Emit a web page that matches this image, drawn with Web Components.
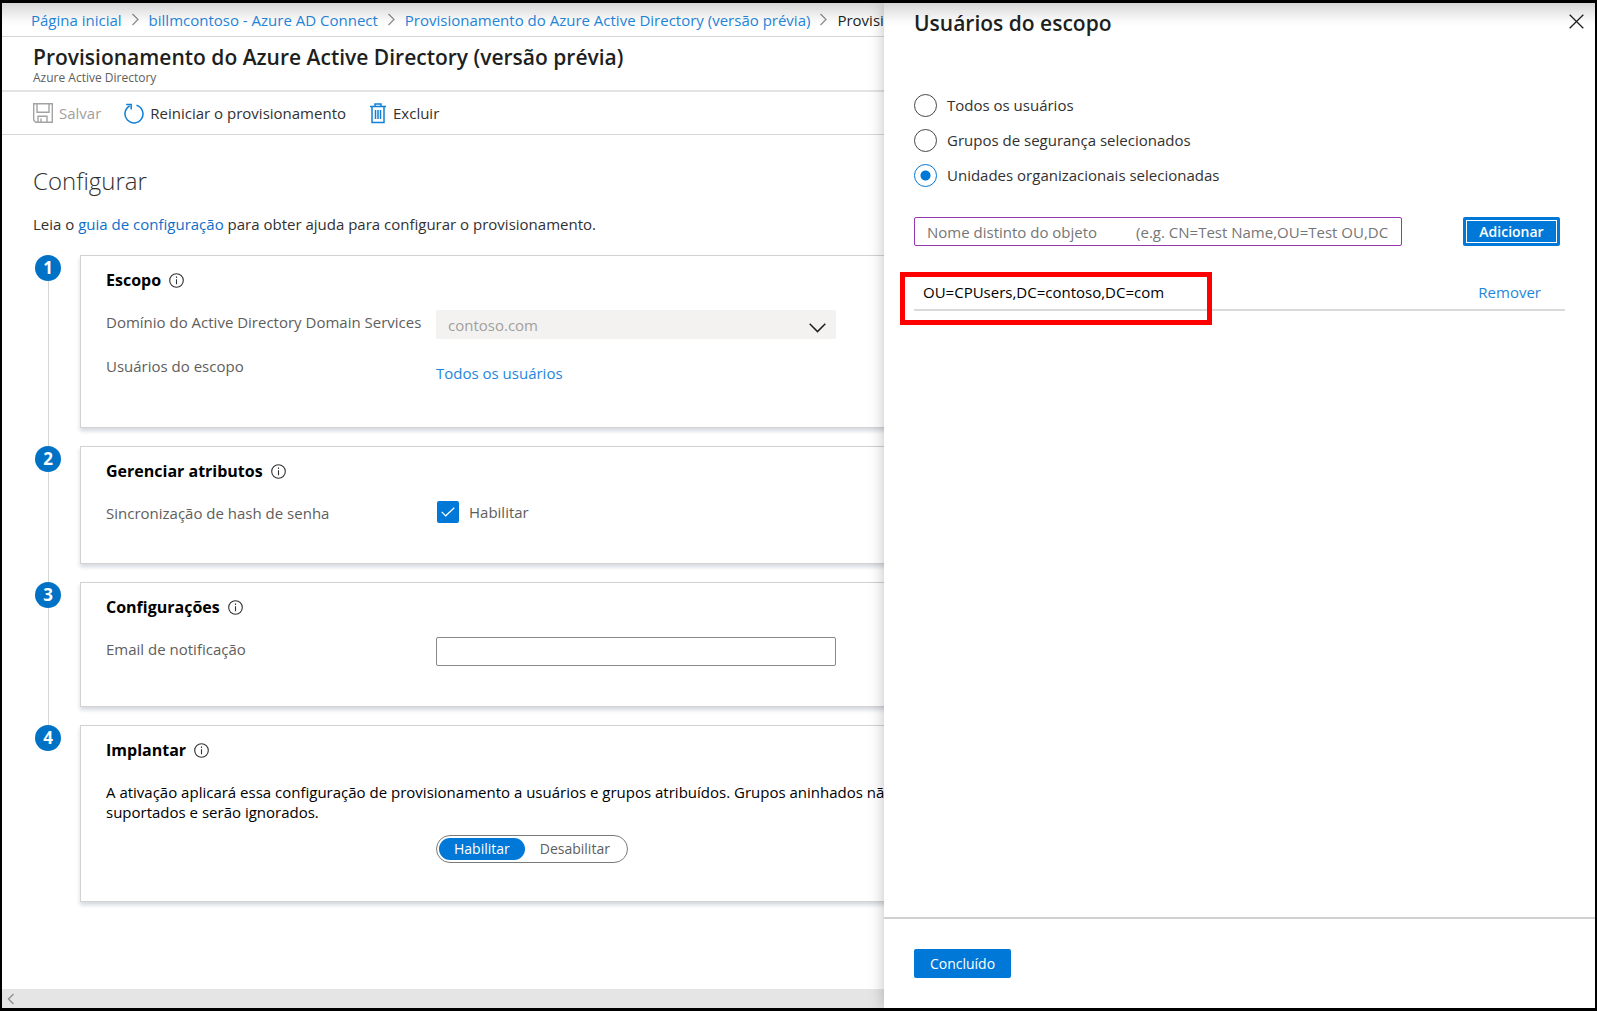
<!DOCTYPE html>
<html lang="pt-BR">
<head>
<meta charset="utf-8">
<title>Provisionamento do Azure Active Directory</title>
<style>
  html, body { height: 100%; margin: 0; }
  body {
    font-family: "Open Sans", "Noto Sans", sans-serif;
    font-size: 15px;
    line-height: 24px;
    color: #323130;
    background: #fff;
    --blue: #0078d7;
    --link: #1f86dc;
    --rule: #d6d6d6;
  }
</style>
</head>
<body>
<portal-frame>
  <portal-blade slot="main">
    <crumb-trail slot="crumbs"></crumb-trail>
    <blade-title slot="title" sub="Azure Active Directory">Provisionamento do Azure Active Directory (versão prévia)</blade-title>
    <command-bar slot="commands"></command-bar>
    <config-page></config-page>
  </portal-blade>
  <scope-panel slot="panel"></scope-panel>
</portal-frame>

<script>
const define = (name, html, setup) => {
  const tpl = document.createElement('template');
  tpl.innerHTML = html;
  customElements.define(name, class extends HTMLElement {
    constructor() {
      super();
      this.attachShadow({ mode: 'open' }).append(tpl.content.cloneNode(true));
    }
    connectedCallback() { if (setup) setup(this, this.shadowRoot); }
  });
};

define('portal-frame', `
<style>
  :host { display: grid; grid-template-columns: minmax(0, 1fr) minmax(0, 711px); grid-template-rows: minmax(0, 1fr);
    position: relative; box-sizing: border-box; height: 100vh; border: solid #000; border-width: 3px 2px; overflow: hidden; }
  .shade { position: absolute; inset: 0 0 auto 0; height: 24px; pointer-events: none; z-index: 3;
    background: linear-gradient(rgba(0,0,0,.16), rgba(0,0,0,.1) 30%, rgba(0,0,0,.02) 75%, transparent); }
</style>
<slot name="main"></slot><slot name="panel"></slot><div class="shade"></div>`);

define('portal-blade', `
<style>
  :host { display: flex; flex-direction: column; min-width: 0; overflow: hidden; }
  .body { flex: 1; min-height: 0; overflow: hidden; }
  .scroll { display: flex; align-items: center; height: 19px; background: #e5e5e5; padding-left: 5px; }
</style>
<slot name="crumbs"></slot><slot name="title"></slot><slot name="commands"></slot>
<div class="body"><slot></slot></div>
<div class="scroll"><svg width="8" height="12" viewBox="0 0 8 12" fill="none" stroke="#8e8e8e" stroke-width="1.3"><path d="M6.5 1 1.5 6l5 5"/></svg></div>`);

define('crumb-trail', `
<style>
  :host { display: block; border-bottom: 1px solid var(--rule); }
  nav { display: flex; align-items: center; height: 33px; padding-left: 29px; gap: 9px; white-space: nowrap; }
  a { color: var(--link); text-decoration: none; flex: none; }
  span { color: #201f1e; min-width: 0; overflow: hidden; }
  svg { flex: none; }
</style>
<nav aria-label="Trilha"></nav>`, (el, root) => {
  const sep = '<svg width="9" height="13" viewBox="0 0 9 13" fill="none" stroke="#8c8c8c" stroke-width="1.2"><path d="M1.5 1 7 6.5l-5.5 5.5"/></svg>';
  root.querySelector('nav').innerHTML = [
    '<a href="#">Página inicial</a>',
    '<a href="#">billmcontoso - Azure AD Connect</a>',
    '<a href="#">Provisionamento do Azure Active Directory (versão prévia)</a>',
    '<span>Provisionamento</span>'].join(sep);
});

define('blade-title', `
<style>
  :host { display: block; box-sizing: border-box; height: 55px; padding: 6px 0 0 31px; border-bottom: 2px solid #e3e3e3; white-space: nowrap; }
  h1 { margin: 0; font-size: 21px; line-height: 28px; font-weight: 600; color: #201f1e; }
  p { margin: 0; font-size: 12px; line-height: 14px; color: #605e5c; }
</style>
<h1><slot></slot></h1><p></p>`, (el, root) => { root.querySelector('p').textContent = el.getAttribute('sub'); });

define('command-bar', `
<style>
  :host { display: flex; align-items: center; height: 42px; padding-left: 31px; gap: 23px; border-bottom: 1px solid var(--rule); }
  button { display: flex; align-items: center; gap: 6px; border: 0; padding: 0; background: none; font: inherit; color: #323130; white-space: nowrap; }
  button:disabled { color: #a19f9d; }
  svg { flex: none; fill: none; }
</style>
<button type="button" disabled>
  <svg width="20" height="20" viewBox="0 0 20 20" stroke="#a3a3a3" stroke-width="1.4"><path d="M.7.7h18.6v18.6H2.7l-2-2z"/><path d="M4 .7v8.6h12V.7M5 19.3v-6h9v6M8 19v-3.500"/></svg>Salvar</button>
<button type="button">
  <svg width="20" height="21" viewBox="0 0 20 21" stroke="#0f80d7" stroke-width="1.5"><path d="M12.500 2.300a9 9 0 1 1-6.800.700"/><path d="M2.200 1.500h5v5"/></svg>Reiniciar o provisionamento</button>
<button type="button">
  <svg width="18" height="21" viewBox="0 0 18 21" stroke="#0f80d7" stroke-width="1.5"><path d="M1 3.500h16M6 3V1h6v2M3 3.500v16h12v-16M6.500 7v9M9 7v9M11.500 7v9"/></svg>Excluir</button>`);

define('config-page', `
<style>
  :host { display: block; min-width: 920px; padding: 30px 0 0 31px; }
  h2 { margin: 0; font-size: 24px; line-height: 32px; font-weight: 300; color: #323130; }
  p { margin: 0; }
  .lead { padding: 15px 0 19px; }
  a { color: #0f6fc9; text-decoration: none; }
  .steps { padding-left: 2px; }
  .todos { color: var(--link); padding: 7px 0 4px; }
  .note { margin-top: 20px; line-height: 20px; color: #000; white-space: nowrap; }
  select, input[type=email] { box-sizing: border-box; width: 400px; height: 29px; border-radius: 2px; font: inherit; padding: 0 12px; }
  input[type=email] { border: 1px solid #8a8886; background: #fff; }
  .pick { display: grid; }
  .pick > * { grid-area: 1 / 1; }
  .pick svg { justify-self: end; align-self: center; margin: 7px 10px 0 0; pointer-events: none; }
  select { appearance: none; border: 0; background: #f3f2f1; color: #a19f9d; opacity: 1; }
  .tick { display: flex; align-items: center; gap: 10px; height: 22px; padding-left: 1px; }
  .tick span { display: grid; width: 22px; height: 22px; }
  .tick span > * { grid-area: 1 / 1; margin: 0; }
  .tick input { appearance: none; width: 22px; height: 22px; border-radius: 2px; background: var(--blue); }
  .tick svg { pointer-events: none; place-self: center; }
</style>
<h2>Configurar</h2>
<p class="lead">Leia o <a href="#">guia de configuração</a> para obter ajuda para configurar o provisionamento.</p>
<div class="steps">
  <step-card number="1" heading="Escopo">
    <field-row><label slot="label" for="domain">Domínio do Active Directory Domain Services</label>
      <div class="pick"><select id="domain" disabled><option>contoso.com</option></select>
      <svg width="17" height="10" viewBox="0 0 17 10" fill="none" stroke="#201f1e" stroke-width="1.500"><path d="m.7.8 7.800 7.800L16.300.800"/></svg></div></field-row>
    <field-row><span slot="label">Usuários do escopo</span><a class="todos" href="#">Todos os usuários</a></field-row>
  </step-card>
  <step-card number="2" heading="Gerenciar atributos">
    <field-row compact><span slot="label">Sincronização de hash de senha</span>
      <label class="tick"><span><input type="checkbox" checked><svg width="14" height="10" viewBox="0 0 14 10" fill="none" stroke="#fff" stroke-width="1.200"><path d="m.700 4.800 4 4L13.300.700"/></svg></span>Habilitar</label></field-row>
  </step-card>
  <step-card number="3" heading="Configurações">
    <field-row><label slot="label" for="mail">Email de notificação</label><input id="mail" type="email"></field-row>
  </step-card>
  <step-card number="4" heading="Implantar" last>
    <p class="note">A ativação aplicará essa configuração de provisionamento a usuários e grupos atribuídos. Grupos aninhados não<br>suportados e serão ignorados.</p>
    <field-row compact><toggle-pill></toggle-pill></field-row>
  </step-card>
</div>`);

define('step-card', `
<style>
  :host { display: grid; grid-template-columns: 26px minmax(0, 1fr); column-gap: 19px; }
  .rail { display: flex; flex-direction: column; align-items: center; }
  .dot { display: grid; place-items: center; width: 26px; height: 26px; border-radius: 50%; background: #0072c6; color: #fff; font-weight: 700; font-size: 17px; line-height: 26px; }
  .line { flex: 1; width: 1px; background: var(--rule); }
  :host([last]) .line { display: none; }
  section { margin-bottom: 18px; padding: 12px 25px 38px; border: 1px solid #d2d2d2; background: #fff; box-shadow: 0 3px 4px rgba(40,60,100,.2); }
  header { display: flex; align-items: center; gap: 8px; }
  h3 { margin: 0; font-size: 16px; line-height: 24px; font-weight: 700; color: #000; }
  .rows { display: flex; flex-direction: column; gap: 13px; padding-top: 18px; }
  :host([last]) .rows { padding-top: 0; }
</style>
<div class="rail"><div class="dot"></div><div class="line"></div></div>
<section><header><h3></h3>
<svg width="15" height="15" viewBox="0 0 15 15" fill="none" stroke="#323130" stroke-width="1.100"><circle cx="7.500" cy="7.500" r="6.800"/><path d="M7.500 6.300v5M7.500 3.600v1.400"/></svg></header>
<div class="rows"><slot></slot></div></section>`, (el, root) => {
  root.querySelector('.dot').textContent = el.getAttribute('number');
  root.querySelector('h3').textContent = el.getAttribute('heading');
});

define('field-row', `
<style>
  :host { display: grid; grid-template-columns: 330px minmax(0, 1fr); align-items: start; min-height: 31px; color: #605e5c; }
  :host([compact]) { min-height: 0; }
  .control { display: flex; }
</style>
<div><slot name="label"></slot></div><div class="control"><slot></slot></div>`);

define('toggle-pill', `
<style>
  :host { display: flex; box-sizing: border-box; height: 28px; padding: 2px; border: 1px solid #7a7a7a; border-radius: 14px; }
  button { border: 0; border-radius: 11px; padding: 0 15px; background: none; font: inherit; font-size: 14px; line-height: 22px; color: #605e5c; }
  button[aria-pressed=true] { background: var(--blue); color: #fff; }
</style>
<button type="button" aria-pressed="true">Habilitar</button><button type="button" aria-pressed="false">Desabilitar</button>`);

define('scope-panel', `
<style>
  :host { display: flex; flex-direction: column; background: #fff; position: relative; z-index: 2; box-shadow: 0 0 14px rgba(0,0,0,.25); }
  header { display: flex; justify-content: space-between; align-items: start; padding: 6px 11px 0 30px; }
  h2 { margin: 0; font-size: 21px; line-height: 28px; font-weight: 600; color: #201f1e; }
  .close { border: 0; padding: 5px 0 0; background: none; line-height: 0; }
  .body { flex: 1; padding: 56px 30px 0; }
  fieldset { border: 0; margin: 0; padding: 0; display: flex; flex-direction: column; gap: 11px; }
  fieldset label { display: flex; align-items: center; gap: 10px; height: 24px; }
  input[type=radio] { appearance: none; box-sizing: border-box; display: grid; place-items: center; flex: none; width: 23px; height: 23px; margin: 0; border: 1px solid #484644; border-radius: 50%; }
  input[type=radio]:checked { border: 1px solid var(--blue); background: radial-gradient(circle, var(--blue) 4.500px, transparent 5.500px); }
  .add { display: flex; align-items: center; gap: 61px; padding: 30px 5px 0 0; }
  .add input { flex: 1; min-width: 0; box-sizing: border-box; height: 29px; padding: 0 12px; border: 1px solid #9438ad; border-radius: 2px; font: inherit; }
  .add input::placeholder { color: #767676; opacity: 1; }
  .primary { box-sizing: border-box; height: 29px; width: 97px; padding: 0; border: 0; border-radius: 2px; background: var(--blue); color: #fff; font: inherit; font-size: 14px; font-weight: 500; }
  .focus { font-weight: 600; outline: 1px solid #fff; outline-offset: -4px; }
  .item { position: relative; display: flex; justify-content: space-between; margin-top: 34px; padding: 0 24px 5px 9px; border-bottom: 2px solid #dadada; color: #000; }
  .item a { color: var(--link); text-decoration: none; }
  .mark { position: absolute; left: -14px; top: -8px; width: 302px; height: 43px; border: 5px solid #f00; pointer-events: none; }
  footer { border-top: 2px solid #d0d0d0; padding: 30px; }
  footer .primary { display: block; }
</style>
<header><h2>Usuários do escopo</h2>
<button class="close" type="button" aria-label="Fechar"><svg width="15" height="15" viewBox="0 0 15 15" stroke="#201f1e" stroke-width="1.300"><path d="m.7.7 13.600 13.600M14.300.700.700 14.300"/></svg></button></header>
<div class="body">
  <fieldset>
    <label><input type="radio" name="scope">Todos os usuários</label>
    <label><input type="radio" name="scope">Grupos de segurança selecionados</label>
    <label><input type="radio" name="scope" checked>Unidades organizacionais selecionadas</label>
  </fieldset>
  <div class="add">
    <input type="text" aria-label="Nome distinto do objeto" placeholder="Nome distinto do objeto&nbsp;&nbsp;&nbsp;&nbsp;&nbsp;&nbsp;&nbsp;&nbsp;&nbsp;&nbsp;(e.g. CN=Test Name,OU=Test OU,DC=contoso,DC=com)">
    <button class="primary focus" type="button">Adicionar</button>
  </div>
  <div class="item"><span>OU=CPUsers,DC=contoso,DC=com</span><a href="#">Remover</a><div class="mark"></div></div>
</div>
<footer><button class="primary" type="button">Concluído</button></footer>`);
</script>
</body>
</html>
